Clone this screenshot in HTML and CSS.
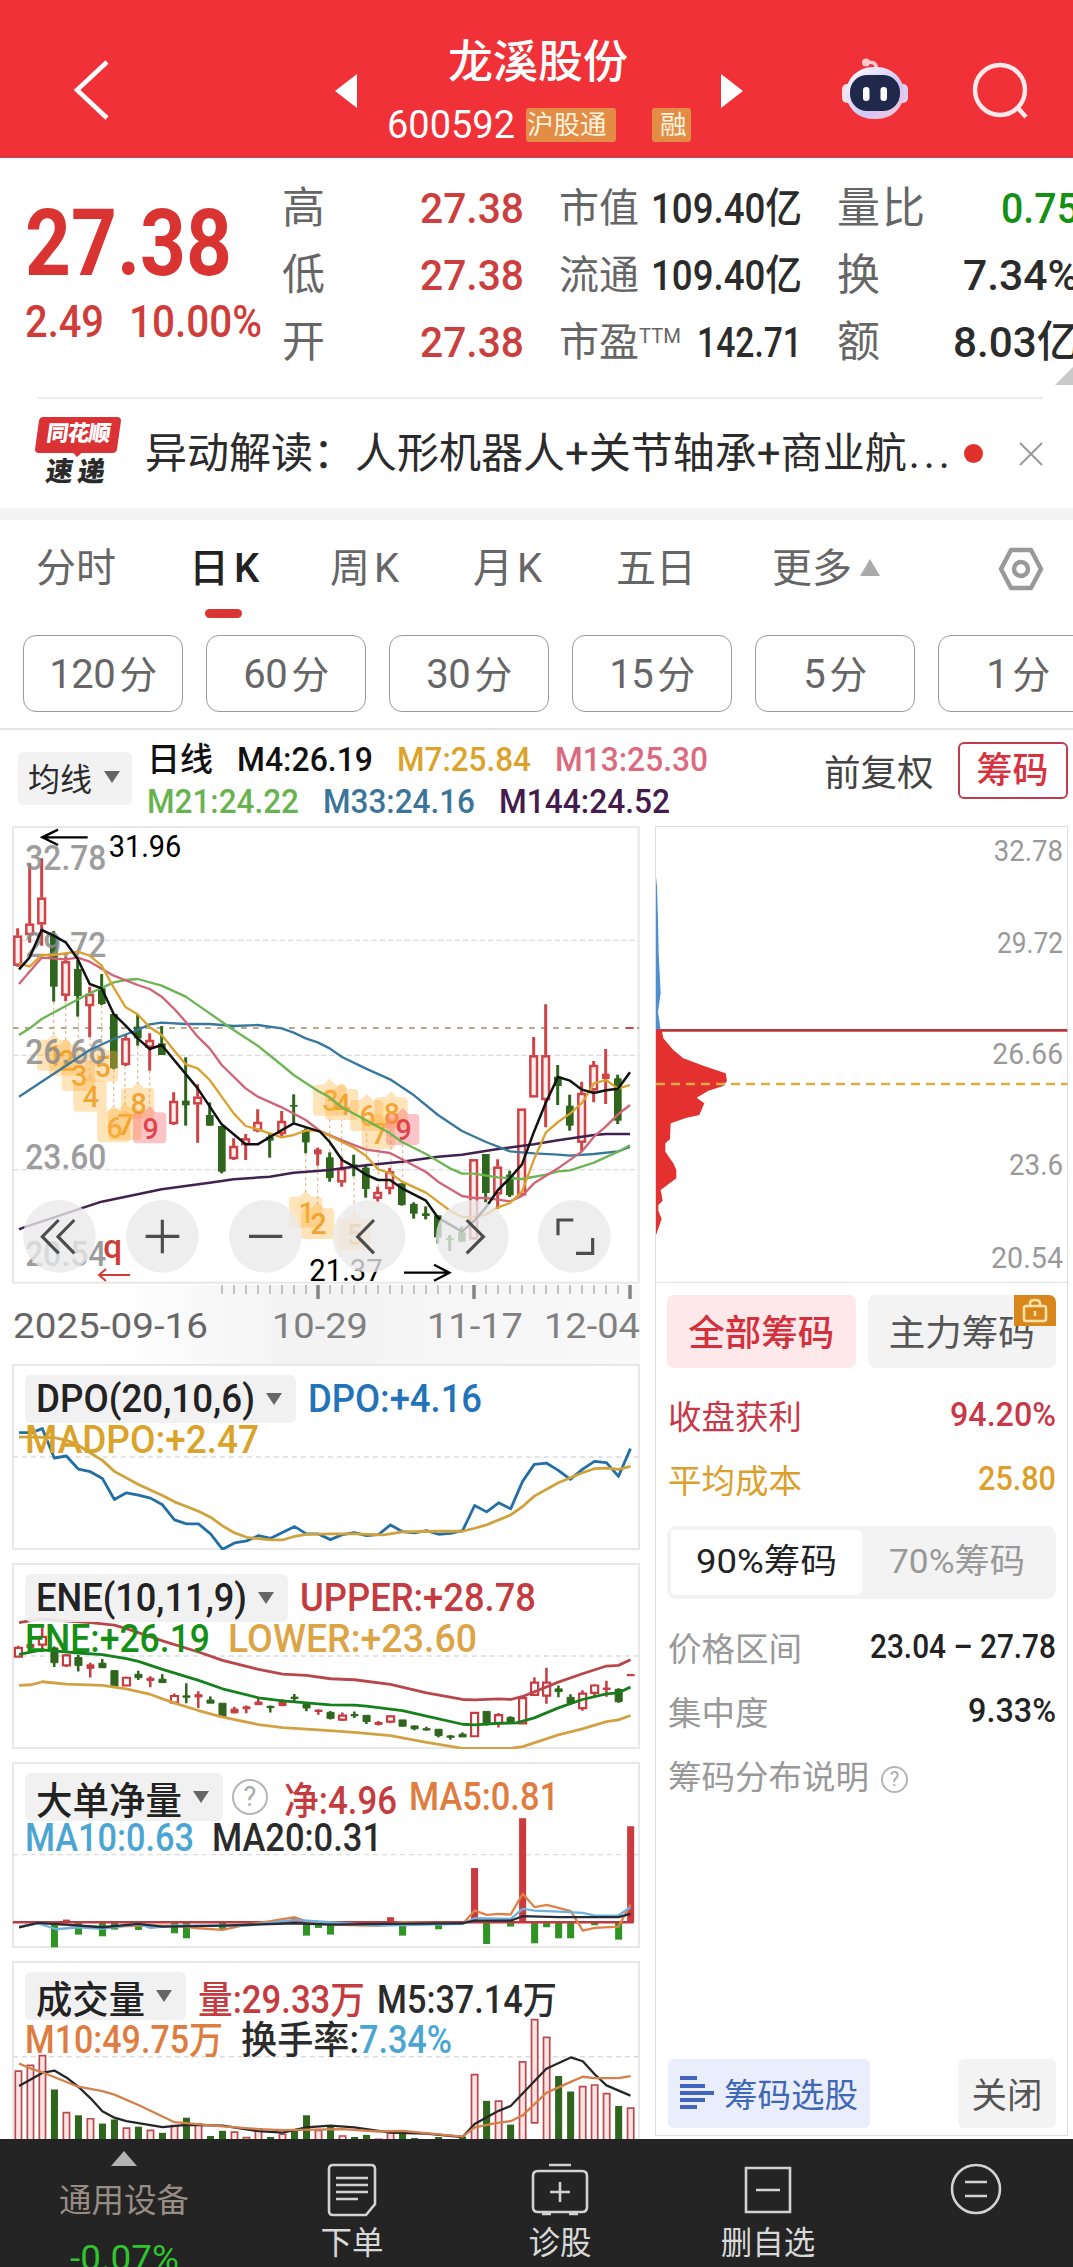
FILE: index.html
```html
<!DOCTYPE html>
<html lang="zh-CN">
  <head>
    <meta charset="UTF-8">
    <meta name="viewport" content="width=device-width, initial-scale=1.0">
    <title>龙溪股份 600592</title>
    <link rel="stylesheet" href="styles.css">
  </head>
  <body>
    <header class="topbar">
      <svg class="back" width="40" height="64" viewBox="0 0 40 64"><path d="M35 4 L5 32 L35 60"/></svg>
      <svg class="arrow" width="22" height="34" viewBox="0 0 22 34"><path d="M22 0 V34 L0 17 Z"/></svg>
      <div class="stock">
        <h1>龙溪股份</h1>
        <div class="stock-code">
          <span data-w="128">600592</span>
          <span class="tag tag-hgt">沪股通</span>
          <span class="tag tag-rong">融</span>
        </div>
      </div>
      <svg class="arrow" width="22" height="34" viewBox="0 0 22 34"><path d="M0 0 V34 L22 17 Z"/></svg>
      <svg class="robot" width="68" height="64" viewBox="0 0 68 64">
        <defs>
          <linearGradient id="shell" x1="0" y1="0" x2="1" y2="1">
            <stop offset="0" stop-color="#ffffff"/>
            <stop offset="0.6" stop-color="#cfc8f7"/>
            <stop offset="1" stop-color="#ffc4d4"/>
          </linearGradient>
        </defs>
        <path d="M35 12 C36 6 32 5 26 5" fill="none" stroke="#ffc9cf" stroke-width="3.5"/>
        <circle cx="25" cy="5.500" r="4" fill="#ffc9cf"/>
        <rect x="1" y="27" width="10" height="19" rx="5" fill="#fbe0ea"/>
        <rect x="57" y="27" width="10" height="19" rx="5" fill="#dccff5"/>
        <rect x="5" y="10" width="58" height="52" rx="27" fill="url(#shell)"/>
        <rect x="9" y="18" width="50" height="36" rx="17" fill="#20294b"/>
        <rect x="22" y="30" width="6.500" height="14" rx="3.200" fill="#fff"/>
        <rect x="39.500" y="30" width="6.500" height="14" rx="3.200" fill="#fff"/>
      </svg>
      <svg class="search" width="60" height="60" viewBox="0 0 60 60">
        <circle cx="28" cy="28" r="25"/>
        <path d="M45 45 L54 55"/>
      </svg>
    </header>

    <section class="quote">
      <div class="price-box">
        <div class="price"><span data-w="207">27.38</span></div>
        <div class="change"><span data-w="79">2.49</span><span data-w="133">10.00%</span></div>
      </div>
      <dl class="quote-col ohl">
        <dt>高</dt><dd class="red"><span data-w="104">27.38</span></dd>
        <dt>低</dt><dd class="red"><span data-w="104">27.38</span></dd>
        <dt>开</dt><dd class="red"><span data-w="104">27.38</span></dd>
      </dl>
      <dl class="quote-col cap">
        <dt>市值</dt><dd><span data-w="151">109.40亿</span></dd>
        <dt>流通</dt><dd><span data-w="151">109.40亿</span></dd>
        <dt>市盈<sup data-w="42">TTM</sup></dt><dd><span data-w="105">142.71</span></dd>
      </dl>
      <dl class="quote-col turn">
        <dt>量比</dt><dd class="green"><span data-w="78">0.75</span></dd>
        <dt>换</dt><dd><span data-w="116">7.34%</span></dd>
        <dt>额</dt><dd><span data-w="126">8.03亿</span></dd>
      </dl>
      <i class="more-corner"></i>
    </section>

    <section class="news">
      <div class="news-logo">
        <span class="news-brand">同花顺</span>
        <span class="news-name">速递</span>
      </div>
      <p>异动解读：人形机器人+关节轴承+商业航<span>...</span></p>
      <i class="dot"></i>
      <svg width="24" height="24" viewBox="0 0 24 24"><path d="M1 1 L23 23 M23 1 L1 23"/></svg>
    </section>

    <nav class="tabs">
      <a>分时</a>
      <a class="active">日<b>K</b></a>
      <a>周<span>K</span></a>
      <a>月<span>K</span></a>
      <a>五日</a>
      <a>更多<i class="tri-up"></i></a>
      <svg width="46" height="44" viewBox="0 0 46 44">
        <path d="M13 3 H33 L43 22 L33 41 H13 L3 22 Z"/>
        <circle cx="23" cy="22" r="7"/>
      </svg>
    </nav>

    <div class="periods">
      <button>120<span>分</span></button>
      <button>60<span>分</span></button>
      <button>30<span>分</span></button>
      <button>15<span>分</span></button>
      <button>5<span>分</span></button>
      <button>1<span>分</span></button>
    </div>

    <section class="ma-bar">
      <button class="ma-select">均线<i class="tri-down"></i></button>
      <div class="ma-values">
        <div>
          <span class="c-black ma-name">日线</span>
          <span class="c-black" data-w="136">M4:26.19</span>
          <span class="c-yellow" data-w="134">M7:25.84</span>
          <span class="c-pink" data-w="153">M13:25.30</span>
        </div>
        <div>
          <span class="c-lime" data-w="152">M21:24.22</span>
          <span class="c-blue" data-w="152">M33:24.16</span>
          <span class="c-purple" data-w="171">M144:24.52</span>
        </div>
      </div>
      <span class="adjust">前复权</span>
      <button class="chip-toggle">筹码</button>
    </section>

    <main class="board">
      <div class="left">
        <svg id="kline" class="kline" width="628" height="459" viewBox="36 18 1884 1377"></svg>
        <svg id="axis" class="axis" width="628" height="79" viewBox="12 1285 628 79"></svg>

        <div class="panel">
          <svg id="dpo" viewBox="28 282 1515 556" preserveAspectRatio="none"></svg>
          <div class="panel-head">
            <div>
              <button><span data-w="219">DPO(20,10,6)</span><i class="tri-down"></i></button>
              <span class="c-dpo" data-w="174">DPO:+4.16</span>
            </div>
            <div><span class="c-yellow" data-w="234">MADPO:+2.47</span></div>
          </div>
        </div>

        <div class="panel">
          <svg id="ene" viewBox="28 879 1515 556" preserveAspectRatio="none"></svg>
          <div class="panel-head">
            <div>
              <button><span data-w="211">ENE(10,11,9)</span><i class="tri-down"></i></button>
              <span class="c-red" data-w="236">UPPER:+28.78</span>
            </div>
            <div>
              <span class="c-green" data-w="185">ENE:+26.19</span>
              <span class="c-gold" data-w="249">LOWER:+23.60</span>
            </div>
          </div>
        </div>

        <div class="panel">
          <svg id="netflow" viewBox="28 36 1515 556" preserveAspectRatio="none"></svg>
          <div class="panel-head">
            <div>
              <button><span data-w="146">大单净量</span><i class="tri-down"></i></button>
              <i class="help">?</i>
              <span class="c-red" data-w="113">净:4.96</span>
              <span class="c-orange" data-w="150">MA5:0.81</span>
            </div>
            <div>
              <span class="c-sky" data-w="169">MA10:0.63</span>
              <span class="c-dark" data-w="170">MA20:0.31</span>
            </div>
          </div>
        </div>

        <div class="panel last">
          <svg id="volume" viewBox="28 632 1515 540" preserveAspectRatio="none"></svg>
          <div class="panel-head">
            <div>
              <button><span data-w="109">成交量</span><i class="tri-down"></i></button>
              <span class="c-red" data-w="167">量:29.33万</span>
              <span class="c-dark" data-w="180">M5:37.14万</span>
            </div>
            <div>
              <span class="c-orange" data-w="198">M10:49.75万</span>
              <span class="turnover"><span class="c-dark" data-w="118">换手率:</span><span class="c-sky" data-w="93">7.34%</span></span>
            </div>
          </div>
        </div>
      </div>

      <aside class="chips">
        <svg id="chips" width="413" height="457" viewBox="45 18 1239 1371"></svg>
        <div class="chip-tabs">
          <button class="on">全部筹码</button>
          <button>主力筹码
            <i class="lock"><svg width="26" height="26" viewBox="0 0 26 26"><rect x="2" y="8" width="22" height="15" rx="2"/><path d="M8 8 V5 Q8 2 13 2 Q18 2 18 5 V8 M13 13 V18"/></svg></i>
          </button>
        </div>
        <div class="chip-row c-profit"><span>收盘获利</span><b data-w="106">94.20%</b></div>
        <div class="chip-row c-cost"><span>平均成本</span><b data-w="78">25.80</b></div>
        <div class="chip-seg"><span class="on"><em data-w="141">90%筹码</em></span><span><em data-w="136">70%筹码</em></span></div>
        <div class="chip-row"><span>价格区间</span><b data-w="186">23.04 – 27.78</b></div>
        <div class="chip-row"><span>集中度</span><b data-w="88">9.33%</b></div>
        <div class="chip-row"><span>筹码分布说明<i class="help small">?</i></span></div>
        <div class="chip-actions">
          <button class="pick">
            <svg width="34" height="34" viewBox="0 0 34 34"><path d="M0 2 H17 M0 10 H25 M0 17 H34 M0 24 H25 M0 31 H17"/></svg>
            筹码选股
          </button>
          <button class="close">关闭</button>
        </div>
      </aside>
    </main>

    <footer class="bottom">
      <div class="sector">
        <i class="tri-up"></i>
        <span>通用设备</span>
        <b data-w="109">-0.07%</b>
      </div>
      <div class="tool">
        <svg width="56" height="56" viewBox="0 0 56 56"><path d="M9 4 H47 Q51 4 51 8 V43 L42 54 H9 Q5 54 5 50 V8 Q5 4 9 4 Z M12 17 H44 M12 24 H44 M12 31 H44 M12 38 H34"/></svg>
        <span>下单</span>
      </div>
      <div class="tool">
        <svg width="58" height="56" viewBox="0 0 58 56"><path d="M18 4 H40 M7 10 H51 Q56 10 56 15 V46 Q56 51 51 51 H7 Q2 51 2 46 V15 Q2 10 7 10 Z M29 21 V41 M19 31 H39 M11 53 H20 M38 53 H47"/></svg>
        <span>诊股</span>
      </div>
      <div class="tool">
        <svg width="56" height="56" viewBox="0 0 56 56"><path d="M6 7 H50 V51 H6 Z M16 29 H40"/></svg>
        <span>删自选</span>
      </div>
      <div class="tool">
        <svg width="56" height="56" viewBox="0 0 56 56"><circle cx="28" cy="28" r="24"/><path d="M17 21 H39 M17 35 H39"/></svg>
      </div>
    </footer>

    <script src="charts.js"></script>
  </body>
</html>
```
FILE: styles.css
```css
* {
  box-sizing: border-box;
}
body {
  margin: 0;
  width: 1073px;
  height: 2267px;
  overflow: hidden;
  background: #fff;
  color: #2b2b2b;
  font-family: Roboto, "Noto Sans CJK SC", sans-serif;
}
h1, p, dl, dd {
  margin: 0;
}
button {
  margin: 0;
  padding: 0;
  border: 0;
  font: inherit;
  color: inherit;
}
i, em {
  font-style: normal;
}
svg {
  display: block;
}
[data-w] {
  display: inline-block;
  flex: none;
  white-space: nowrap;
  transform-origin: 0 50%;
}

.c-black { color: #111; }
.c-dark { color: #2b2b2b; }
.c-yellow { color: #dba32a; }
.c-gold { color: #dda445; }
.c-pink { color: #dc6a7e; }
.c-lime { color: #68b350; }
.c-blue { color: #3b7599; }
.c-purple { color: #451a4d; }
.c-dpo { color: #2273b8; }
.c-red { color: #c43c40; }
.c-green { color: #159015; }
.c-orange { color: #df7c40; }
.c-sky { color: #4aa5d2; }

.tri-down {
  border: 8px solid transparent;
  border-top: 12px solid #666;
  border-bottom: 0;
}

/* top bar */
.topbar {
  display: flex;
  align-items: flex-start;
  height: 158px;
  background: #f03138;
  border-bottom: 2px solid #d8393f;
  color: #fff;
}
.topbar .back {
  margin: 58px 0 0 72px;
  fill: none;
  stroke: #fff;
  stroke-width: 4.5;
}
.topbar .arrow {
  margin-top: 74px;
  fill: #fff;
}
.topbar .back + .arrow {
  margin-left: 223px;
}
.stock {
  width: 364px;
  padding: 33px 0 0 30px;
}
.stock h1 {
  margin-left: 61px;
  font-size: 45px;
  line-height: 60px;
  font-weight: 500;
}
.stock-code {
  display: flex;
  align-items: center;
  height: 34px;
  margin-top: 15px;
  font-size: 38px;
}
.tag {
  height: 34px;
  background: #e38c45;
  border-radius: 3px;
  color: #fff3dd;
  font-size: 26.500px;
  line-height: 33px;
}
.tag-hgt {
  width: 90px;
  margin-left: 11px;
  padding-left: 1px;
}
.tag-rong {
  width: 39px;
  margin-left: 36px;
  padding-left: 8px;
}
.robot {
  margin: 57px 0 0 98px;
}
.search {
  margin: 62px 0 0 63px;
  fill: none;
  stroke: #ffe9ea;
  stroke-width: 4.5;
}

/* quote */
.quote {
  position: relative;
  display: flex;
  height: 241px;
  overflow: hidden;
}
.quote::after {
  content: "";
  position: absolute;
  left: 38px;
  right: 30px;
  bottom: 0;
  border-bottom: 2px solid #ececec;
}
.price-box {
  width: 282px;
  flex: none;
  padding: 36px 0 0 25px;
  color: #d93431;
}
.price {
  height: 100px;
  font-size: 92px;
  font-weight: 700;
  line-height: 100px;
}
.change {
  display: flex;
  gap: 25px;
  margin-top: 2px;
  font-size: 45px;
  line-height: 52px;
  color: #cf3d3b;
  font-weight: 500;
}
.quote-col {
  display: grid;
  grid-template-columns: max-content auto;
  grid-auto-rows: 67px;
  justify-content: space-between;
  align-content: start;
  flex: none;
  padding-top: 17px;
  line-height: 67px;
  font-weight: 500;
}
.quote-col dt {
  font-size: 43px;
  font-weight: 400;
  color: #666;
  white-space: nowrap;
}
.quote-col dd {
  width: 0;
  justify-self: end;
  display: flex;
  justify-content: flex-end;
  font-size: 43px;
}
.ohl {
  width: 242px;
}
.cap {
  width: 243px;
  margin-left: 35px;
}
.quote-col.cap dt {
  font-size: 40px;
}
.quote-col.cap dd {
  font-size: 42px;
}
.cap sup {
  position: relative;
  top: -13px;
  font-size: 20px;
  line-height: 0;
  vertical-align: baseline;
}
.turn {
  width: 242px;
  margin-left: 35px;
}
.turn dt {
  letter-spacing: 2px;
}
.red { color: #cc3f3f; }
.green { color: #149014; }
.more-corner {
  position: absolute;
  right: 0;
  bottom: 14px;
  border-left: 18px solid transparent;
  border-bottom: 18px solid #c9c9c9;
}

/* news */
.news {
  display: flex;
  align-items: center;
  height: 121px;
  border-bottom: 12px solid #f3f3f3;
}
.news-logo {
  width: 82px;
  margin: -1px 0 0 37px;
}
.news-brand,
.news-name {
  display: block;
  transform: skewX(-8deg);
  white-space: nowrap;
  font-weight: 900;
  text-align: center;
}
.news-brand {
  position: relative;
  height: 36px;
  border-radius: 4px;
  background: #da3235;
  color: #fff;
  font-size: 22px;
  line-height: 34px;
  letter-spacing: -1px;
}
.news-brand::after {
  content: "";
  position: absolute;
  left: 38px;
  top: 35px;
  border: 5px solid transparent;
  border-top-color: #da3235;
}
.news-name {
  margin-top: 2px;
  font-size: 27px;
  line-height: 34px;
  letter-spacing: 5px;
}
.news p {
  width: 812px;
  margin-left: 26px;
  font-size: 42px;
  line-height: 60px;
  white-space: nowrap;
}
.news p span {
  margin-left: 2px;
  letter-spacing: 4px;
}
.news .dot {
  width: 19px;
  height: 19px;
  margin-left: 7px;
  border-radius: 50%;
  background: #e0312c;
}
.news svg {
  margin-left: 36px;
  fill: none;
  stroke: #999;
  stroke-width: 2;
}

/* period tabs */
.tabs {
  display: flex;
  align-items: flex-start;
  height: 115px;
  padding: 21px 0 0 36px;
  color: #666;
  font-size: 40px;
  line-height: 56px;
  white-space: nowrap;
}
.tabs a {
  width: 143px;
}
.tabs a:first-child {
  width: 153px;
}
.tabs a:nth-child(2) {
  width: 141px;
}
.tabs a:nth-child(5) {
  width: 156px;
}
.tabs span {
  margin-left: 4px;
}
.tabs .active {
  position: relative;
  color: #222;
  font-weight: 500;
}
.tabs .active b {
  margin-left: 5px;
  font-weight: 500;
}
.tabs .active::after {
  content: "";
  position: absolute;
  left: 16px;
  top: 68px;
  width: 37px;
  height: 9px;
  border-radius: 5px;
  background: #d73634;
}
.tabs .tri-up {
  display: inline-block;
  margin: 0 0 6px 8px;
  border: 10px solid transparent;
  border-bottom: 17px solid #aaa;
  border-top: 0;
}
.tabs svg {
  margin: 6px 0 0 83px;
  fill: none;
  stroke: #999;
  stroke-width: 4.5;
  stroke-linejoin: round;
}
.periods {
  display: flex;
  gap: 23px;
  height: 95px;
  padding-left: 23px;
  overflow: hidden;
  border-bottom: 2px solid #e4e4e4;
}
.periods button {
  flex: none;
  width: 160px;
  height: 77px;
  padding-bottom: 4px;
  border: 1.500px solid #999;
  border-radius: 13px;
  background: #fff;
  color: #666;
  font-size: 40px;
  letter-spacing: -0.5px;
}
.periods span {
  margin-left: 4px;
  font-size: 38px;
}

/* moving averages */
.ma-bar {
  display: flex;
  align-items: flex-start;
  height: 96px;
  padding-left: 18px;
}
.ma-select {
  display: flex;
  align-items: center;
  width: 114px;
  height: 53px;
  margin-top: 22px;
  padding: 0 0 3px 10px;
  border-radius: 6px;
  background: #f2f2f2;
  font-size: 32px;
}
.ma-select .tri-down {
  margin-left: 12px;
}
.ma-values {
  width: 676px;
  padding: 9px 0 0 15px;
  font-size: 33.500px;
  line-height: 42px;
  font-weight: 500;
}
.ma-values div {
  display: flex;
  gap: 24px;
}
.ma-values .ma-name {
  font-size: 33px;
}
.adjust {
  margin: 19px 0 0 16px;
  font-size: 36.500px;
  line-height: 50px;
  color: #444;
}
.chip-toggle {
  width: 110px;
  height: 57px;
  margin: 12px 0 0 24px;
  border: 2px solid #c23b4c;
  border-radius: 6px;
  background: #fff;
  color: #d6323f;
  font-size: 36px;
  font-weight: 500;
  line-height: 50px;
}

/* charts */
.board {
  display: flex;
  height: 1313px;
  overflow: hidden;
}
.left {
  flex: none;
  width: 655px;
  padding-left: 12px;
}
.axis {
  background: linear-gradient(to right, #fff 15%, #f3f3f3 45%, #f9f9f9);
}
.panel {
  display: grid;
  width: 628px;
  height: 186px;
  margin-bottom: 13px;
  border: 2px solid #e8e8e8;
}
.panel > * {
  grid-area: 1 / 1;
}
.panel > svg {
  width: 628px;
  height: 186px;
  margin: -2px;
}
.panel.last {
  border-bottom: 0;
}
.panel svg * {
  vector-effect: non-scaling-stroke;
}
.panel-head {
  z-index: 1;
  padding: 9px 0 0 11px;
  font-size: 38px;
  font-weight: 500;
  white-space: nowrap;
}
.panel-head > div {
  display: flex;
  align-items: center;
  gap: 12px;
  height: 48px;
}
.panel-head > div + div {
  gap: 18px;
  height: 33px;
}
.panel-head button {
  display: flex;
  align-items: center;
  gap: 11px;
  height: 48px;
  padding: 0 14px 0 11px;
  border-radius: 6px;
  background: rgba(240, 240, 240, 0.92);
  color: #222;
}
.help {
  width: 36px;
  height: 36px;
  border: 2.500px solid #b5b5b5;
  border-radius: 50%;
  color: #aaa;
  font-size: 27px;
  font-weight: 400;
  line-height: 32px;
  text-align: center;
}
.panel-head .help {
  margin: 0 4px 0 -3px;
}
.help.small {
  display: inline-block;
  width: 27px;
  height: 27px;
  margin-left: 12px;
  border-width: 2px;
  font-size: 20px;
  line-height: 23px;
  vertical-align: 3px;
}
svg text {
  font-family: Roboto, "Noto Sans CJK SC", sans-serif;
}

/* chip distribution */
.chips {
  flex: none;
  width: 413px;
  height: 1310px;
  border: 1px solid #dedede;
}
.chips > svg {
  margin: -1px;
}
.chip-tabs {
  display: flex;
  gap: 12px;
  margin: 13px 11px 14px;
}
.chip-tabs button {
  position: relative;
  flex: 1;
  height: 73px;
  padding-bottom: 3px;
  border-radius: 7px;
  background: #f3f3f3;
  color: #555;
  font-size: 36.500px;
}
.chip-tabs .on {
  background: #fee8ea;
  color: #d2303c;
  font-weight: 500;
}
.lock {
  position: absolute;
  right: 0;
  top: 0;
  width: 42px;
  height: 31px;
  padding: 3px 8px;
  border-radius: 0 7px 0 0;
  background: #d8871c;
}
.lock svg {
  fill: none;
  stroke: #ffe3a8;
  stroke-width: 2.500;
}
.chip-row {
  display: flex;
  justify-content: space-between;
  align-items: center;
  height: 64px;
  padding: 0 11px 0 12px;
  font-size: 33.500px;
  color: #999;
}
.chip-row b {
  color: #222;
  font-weight: 500;
}
.c-profit, .chip-row.c-profit b {
  color: #c93848;
}
.c-cost, .chip-row.c-cost b {
  color: #dd9f2b;
}
.chip-seg {
  display: flex;
  height: 73px;
  margin: 16px 11px 15px;
  padding: 4px;
  border-radius: 9px;
  background: #f3f3f3;
  color: #999;
  font-size: 34px;
  line-height: 63px;
}
.chip-seg span {
  display: flex;
  flex: 1;
  justify-content: center;
}
.chip-seg .on {
  border-radius: 5px;
  background: #fff;
  color: #222;
}
.chip-actions {
  display: flex;
  justify-content: space-between;
  margin: 253px 11px 0 12px;
}
.chip-actions button {
  height: 69px;
  padding-bottom: 2px;
  border-radius: 6px;
}
.chip-actions .pick {
  display: flex;
  align-items: center;
  gap: 10px;
  width: 202px;
  padding-left: 12px;
  background: #e9edfc;
  color: #3e67b4;
  font-size: 33.500px;
  white-space: nowrap;
}
.pick svg {
  stroke: #4465bd;
  stroke-width: 4;
}
.chip-actions .close {
  width: 98px;
  background: #f3f3f3;
  color: #555;
  font-size: 35.500px;
}

/* bottom bar */
.bottom {
  display: grid;
  grid-template-columns: 248px repeat(4, 208px);
  height: 128px;
  overflow: hidden;
  background: #242424;
  color: #d8d8d8;
}
.bottom > div {
  display: flex;
  flex-direction: column;
  align-items: center;
}
.bottom .tri-up {
  margin-top: 12px;
  border: 13px solid transparent;
  border-bottom: 15px solid #b3b3b3;
  border-top: 0;
}
.sector span {
  margin-top: 12px;
  color: #978d85;
  font-size: 32.500px;
  line-height: 46px;
}
.sector b {
  margin-top: 10px;
  color: #2fc52f;
  font-size: 35px;
  font-weight: 400;
  line-height: 50px;
}
.tool svg {
  margin-top: 22px;
  fill: none;
  stroke: #d2d2d2;
  stroke-width: 2.600;
}
.tool span {
  margin-top: 2px;
  font-size: 31.500px;
  line-height: 49px;
}
```
FILE: charts.js
```js
document.querySelectorAll("[data-w]").forEach(function (el) {
  const natural = el.getBoundingClientRect().width;
  const w = Number(el.dataset.w);
  el.style.transform = `scaleX(${w / natural})`;
  el.style.marginRight = `${w - natural}px`;
});

// [colour, high, low, top, bottom]
const candles = [
  ["r", 325, 440, 347, 437], ["r", 130, 368, 311, 345], ["r", 115, 377, 233, 313], ["g", 333, 545, 348, 500],
  ["r", 410, 543, 424, 527], ["g", 420, 590, 447, 528], ["r", 500, 652, 522, 558], ["g", 462, 555, 505, 552],
  ["g", 582, 748, 582, 745], ["r", 645, 738, 655, 735], ["g", 583, 677, 620, 655], ["r", 640, 752, 660, 683],
  ["g", 618, 705, 670, 705], ["r", 817, 915, 843, 912], ["g", 712, 917, 842, 856], ["r", 793, 968, 830, 853],
  ["g", 847, 917, 885, 917], ["g", 918, 1060, 918, 1055], ["r", 955, 1020, 978, 1017], ["r", 942, 1020, 955, 975],
  ["r", 868, 937, 906, 933], ["g", 940, 1013, 950, 962], ["r", 873, 950, 903, 942], ["g", 823, 908, 855, 860],
  ["g", 925, 1000, 930, 967], ["r", 983, 1037, 988, 1003], ["g", 997, 1085, 1012, 1074], ["r", 1012, 1100, 1045, 1087],
  ["g", 1004, 1069, 1033, 1040], ["g", 1038, 1133, 1043, 1107], ["r", 1100, 1147, 1116, 1136], ["r", 1043, 1123, 1054, 1107],
  ["g", 1090, 1157, 1090, 1155], ["g", 1147, 1196, 1152, 1181], ["g", 1159, 1198, 1180, 1188], ["g", 1186, 1270, 1186, 1252],
  ["g", 1245, 1293, 1255, 1260], ["g", 1219, 1265, 1237, 1265], ["r", 1018, 1258, 1018, 1258], ["g", 1002, 1147, 1002, 1119],
  ["r", 1018, 1167, 1040, 1123], ["g", 1052, 1131, 1064, 1126], ["r", 866, 1126, 866, 1126], ["r", 651, 832, 706, 832],
  ["r", 553, 922, 706, 840], ["g", 735, 855, 770, 798], ["g", 824, 932, 857, 917], ["r", 785, 994, 819, 968],
  ["r", 723, 847, 735, 811], ["r", 687, 852, 761, 777], ["g", 764, 912, 775, 902], ["r", 621, 627, 621, 627]
];

const volumes = [
  950, 933, 905, 1005, 1070, 1080, 1088, 1104, 1092, 1115, 1113, 1122, 1131, 1108, 1087, 1103, 1140, 1125, 1127, 1143,
  1117, 1143, 1133, 1120, 1080, 1122, 1113, 1138, 1143, 1137, 1148, 1128, 1123, 1146, 1158, 1143, 1150, 1142, 960, 1038,
  1037, 1107, 923, 800, 852, 966, 1011, 995, 990, 1015, 1053, 1057
];

const flows = {
  3: 590, 4: 507, 5: 552, 7: 557, 8: 537, 10: 538, 13: 548, 14: 563, 17: 537, 23: 500, 24: 555, 25: 532, 26: 552,
  31: 500, 32: 555, 35: 536, 38: 353, 39: 580, 41: 528, 42: 204, 43: 578, 44: 530, 45: 563, 46: 563, 48: 524,
  50: 567, 51: 228
};

const line = (points, color, width = 2.3) =>
  `<polyline points="${points}" fill="none" stroke="${color}" stroke-width="${width}" stroke-linejoin="round"/>`;

const label = (x, y, w, size, color, text) =>
  `<text x="${x}" y="${y}" textLength="${w}" lengthAdjust="spacingAndGlyphs" font-size="${size}" fill="${color}">${text}</text>`;

const put = (id, html) => { document.getElementById(id).innerHTML = html; };

function dashed(x1, x2, y, color = "#dcdcdc", dash = "5 4", width = 1.3) {
  return `<path d="M${x1} ${y} H${x2}" stroke="${color}" stroke-width="${width}" stroke-dasharray="${dash}"/>`;
}

// Main chart
function drawKline() {
  let out = `<rect x="39" y="21" width="1877" height="1367" fill="#fff" stroke="#e8e8e8" stroke-width="6"/>`;
  [361, 706, 1049].forEach(y => { out += dashed(39, 1918, y, "#dcdcdc", "16 9", 3.5); });
  out += dashed(39, 1918, 624, "#b5a88b", "17 19", 6);

  candles.forEach(([c, high, low, top, bottom], i) => {
    const x = 53 + 36 * i;
    const color = c === "r" ? "#cf4245" : "#2f651c";
    const h = Math.max(bottom - top, 5);
    if (c === "r" && h > 18) {
      out += `<path d="M${x} ${high} V${top} M${x} ${bottom} V${low}" stroke="${color}" stroke-width="9"/>`;
      out += `<rect x="${x - 10}" y="${top + 3}" width="20" height="${h - 6}" fill="#fff0f0" stroke="${color}" stroke-width="7.500"/>`;
    } else {
      out += `<path d="M${x} ${high} V${low}" stroke="${color}" stroke-width="9"/>`;
      out += `<rect x="${x - 11}" y="${top}" width="23" height="${h}" fill="${color}"/>`;
    }
  });

  const marks = [
    [161, 707, 1], [197, 722, 2], [235, 768, 3], [270, 830, 4], [305, 740, 5], [341, 922, 6], [375, 915, 7], [413, 852, 8], [449, 925, 9],
    [917, 1178, 1], [953, 1212, 2], [989, 842, 3], [1025, 855, 4], [1062, 1245, 5], [1100, 888, 6], [1135, 942, 7], [1173, 880, 8], [1208, 930, 9]
  ];
  marks.forEach(([x, y, n]) => {
    const i = Math.round((x - 53) / 36);
    const low = candles[i][2];
    if (y > low) {
      out += `<path d="M${x} ${low} V${y - 60}" stroke="#dfb98c" stroke-width="3.500" stroke-dasharray="9 9"/>`;
    } else {
      out += `<path d="M${x} ${candles[i][1]} V${y + 45}" stroke="#dfb98c" stroke-width="3.500" stroke-dasharray="9 9"/>`;
    }
    const fill = n === 9 ? "#f8656c" : "#ffb548";
    out += `<path d="M${x - 38} ${y - 48} H${x - 18} L${x} ${y - 66} L${x + 18} ${y - 48} H${x + 38} Q${x + 50} ${y - 48} ${x + 50} ${y - 36} V${y + 33} Q${x + 50} ${y + 45} ${x + 38} ${y + 45} H${x - 38} Q${x - 50} ${y + 45} ${x - 50} ${y + 33} V${y - 36} Q${x - 50} ${y - 48} ${x - 38} ${y - 48} Z" fill="${fill}" opacity="0.38"/>`;
    out += `<text x="${x + 3}" y="${y + 31}" text-anchor="middle" font-size="86" font-weight="500" fill="${n === 9 ? "#da2f38" : "#f09b1c"}" opacity="0.85">${n}</text>`;
  });

  [[150, "32.78"], [412, "29.72"], [732, "26.66"], [1047, "23.60"], [1337, "20.54"]].forEach(([y, t]) => {
    out += `<g font-weight="500" opacity="0.85">${label(76, y, 243, 104, "#8c8c8c", t)}</g>`;
  });

  out += line("57,1228 70,1223 250,1163 305,1145 377,1130 485,1108 629,1088 701,1078 809,1070 881,1058 989,1050 1026,1045 1098,1036 1206,1025 1314,1010 1386,1004 1494,987 1602,973 1674,961 1782,945 1818,942 1890,942", "#41214f", 7.5);
  out += line("57,830 125,785 197,738 269,690 341,657 413,630 449,613 485,608 557,612 629,612 701,618 773,615 845,625 881,638 917,655 953,667 989,685 1026,711 1098,746 1170,778 1242,826 1314,885 1386,933 1458,966 1530,994 1602,1000 1674,1004 1710,1007 1782,1002 1854,994 1890,981", "#37789c", 7);
  out += line("57,645 89,625 125,597 197,558 269,520 341,487 377,480 413,477 485,497 557,530 629,580 701,630 773,677 845,735 881,765 953,812 989,832 1026,862 1098,901 1170,940 1206,966 1278,1002 1350,1045 1386,1061 1422,1061 1494,1072 1566,1077 1638,1064 1674,1054 1710,1051 1782,1028 1854,995 1890,976", "#6cb552", 7);
  out += line("57,492 125,413 197,418 233,413 269,425 341,467 413,495 449,507 485,530 521,565 557,605 593,650 629,685 665,735 737,805 773,830 845,862 917,900 960,933 1026,961 1098,989 1170,999 1206,1018 1278,1056 1314,1085 1386,1128 1422,1134 1458,1134 1530,1144 1566,1128 1602,1090 1674,1045 1746,994 1782,950 1818,919 1854,883 1890,855", "#cf6577", 7);
  out += line("57,430 89,440 125,405 161,405 233,395 269,407 305,437 341,503 377,562 413,583 449,622 485,645 521,690 557,733 593,745 629,780 665,830 701,880 737,918 773,928 845,952 881,945 917,932 953,932 989,947 1026,966 1062,983 1098,1007 1134,1048 1170,1059 1206,1085 1278,1118 1350,1172 1386,1191 1422,1191 1458,1183 1494,1162 1530,1149 1566,1115 1602,1018 1638,937 1674,906 1710,881 1746,849 1782,790 1818,780 1854,806 1890,795", "#dba12f", 7);
  out += line("57,448 89,412 125,330 161,347 197,367 233,417 269,492 305,505 341,582 377,617 413,655 449,687 485,675 593,805 665,913 737,973 773,973 820,945 881,910 960,935 989,966 1026,1020 1062,1040 1098,1064 1134,1080 1170,1080 1206,1105 1278,1142 1314,1193 1386,1235 1422,1203 1458,1162 1494,1110 1530,1074 1566,1033 1602,935 1638,847 1674,771 1710,782 1746,809 1782,819 1818,811 1854,806 1890,757", "#111", 7.5);

  out += label(326, 112, 218, 94, "#000", "31.96");
  out += label(928, 1382, 220, 94, "#000", "21.37");
  out += `<path d="M263 52 H127 M174 29 L127 52 L174 75 M1212 1358 H1348 M1302 1334 L1348 1358 L1302 1382" fill="none" stroke="#000" stroke-width="7"/>`;
  out += `<text x="310" y="1315" font-size="100" font-weight="500" fill="#cf3c38">q</text>`;
  out += `<path d="M390 1365 H297 M318 1347 L297 1365 L318 1383" fill="none" stroke="#cf3c38" stroke-width="6"/>`;

  [178, 487, 796, 1107, 1417, 1723].forEach(x => {
    out += `<circle cx="${x}" cy="1249" r="109" fill="#e9e9e9" opacity="0.78"/>`;
  });
  out += `<path d="M176 1200 L127 1250 L176 1300 M223 1200 L174 1250 L223 1300 M437 1249 H538 M487 1199 V1300 M747 1249 H847 M1122 1200 L1073 1250 L1122 1300 M1400 1200 L1450 1250 L1400 1300 M1674 1246 V1200 H1720 M1778 1254 V1300 H1728" fill="none" stroke="#4d4d4d" stroke-width="9.500"/>`;
  put("kline", out);
}

function drawAxis() {
  let out = "";
  for (let i = 17; i < 52; i++) {
    const big = i === 25 || i === 38 || i === 51;
    out += `<path d="M${18 + 12 * i} 1285 V${big ? 1299 : 1294}" stroke="${big ? "#858585" : "#a5a5a5"}" stroke-width="${big ? 3.5 : 1.3}"/>`;
  }
  out += label(13, 1338, 195, 35, "#666", "2025-09-16");
  out += label(272, 1338, 96, 35, "#808080", "10-29");
  out += label(427, 1338, 96, 35, "#808080", "11-17");
  out += label(544, 1338, 96, 35, "#808080", "12-04");
  put("axis", out);
}

const subX = i => 43 + 28.96 * i;

function drawDpo() {
  put("dpo", dashed(30, 1542, 560)
    + line("45,487 75,487 101,475 130,563 159,557 188,596 217,604 246,624 275,687 304,667 333,674 362,683 391,703 420,748 449,760 478,760 507,790 536,836 565,817 594,811 623,795 652,803 710,768 738,790 767,790 796,807 825,792 854,786 883,795 912,792 941,763 970,783 999,787 1028,780 1057,791 1086,788 1115,780 1144,705 1173,724 1202,697 1231,715 1260,632 1288,582 1317,578 1346,600 1375,627 1404,597 1433,573 1462,577 1491,618 1520,535", "#226fa5", 2.8)
    + line("45,500 130,502 160,510 188,525 217,548 246,570 275,603 333,642 391,675 420,694 478,722 507,740 536,766 565,787 594,800 652,808 681,808 710,797 738,791 796,790 854,790 925,793 970,784 1057,782 1115,782 1144,773 1173,763 1231,733 1260,708 1288,677 1346,637 1404,607 1433,595 1462,593 1491,597 1520,588", "#cfa33c", 2.8));
}

function drawEne() {
  // same candles as the main chart on a smaller price scale
  const y = v => 1213 + 0.29 * (v - 624);
  let out = dashed(30, 1542, 1157);
  candles.forEach(([c, high, low, top, bottom], i) => {
    const x = subX(i);
    const color = c === "r" ? "#c63c40" : "#2f651c";
    const h = Math.max(y(bottom) - y(top), 4);
    const hollow = c === "r" && h > 12;
    out += `<path d="M${x} ${y(high)} V${y(top)} M${x} ${y(bottom)} V${y(low)}" stroke="${color}" stroke-width="2.500"/>`;
    out += `<rect x="${x - 8}" y="${y(top)}" width="17" height="${h}" fill="${hollow ? "#fff" : color}" stroke="${color}" stroke-width="${hollow ? 2.2 : 1}"/>`;
  });
  out += line("45,1057 101,1045 130,1050 217,1057 275,1065 304,1075 391,1112 478,1145 536,1170 623,1197 681,1211 738,1215 796,1225 854,1228 941,1242 1028,1267 1115,1287 1144,1288 1202,1285 1231,1287 1260,1278 1346,1235 1404,1210 1462,1187 1491,1185 1520,1168", "#b9464b", 2.8);
  out += line("45,1152 101,1139 188,1148 246,1153 304,1165 333,1173 391,1197 478,1230 536,1255 623,1282 681,1291 738,1297 796,1303 854,1304 883,1307 970,1320 1028,1337 1115,1361 1144,1363 1202,1358 1245,1357 1288,1342 1346,1312 1404,1287 1462,1270 1491,1267 1520,1250", "#15801c", 2.8);
  out += line("45,1245 75,1243 101,1234 159,1241 246,1245 304,1255 362,1272 420,1298 478,1320 536,1340 623,1362 681,1371 767,1378 854,1385 941,1395 1028,1415 1115,1433 1231,1433 1260,1428 1346,1393 1404,1375 1462,1353 1491,1348 1520,1335", "#d2a144", 2.8);
  put("ene", out);
}

function drawNetflow() {
  let out = dashed(30, 1542, 313);
  Object.keys(flows).forEach(i => {
    const v = flows[i];
    const color = v < 515 ? "#cb3a3c" : "#309425";
    out += `<rect x="${subX(Number(i)) - 8}" y="${Math.min(v, 515)}" width="17" height="${Math.abs(v - 515)}" fill="${color}"/>`;
  });
  out += line("30,515 1528,515", "#bd3b3f", 2.6);
  out += line("45,530 90,518 130,520 188,526 246,530 333,525 420,525 478,533 536,538 594,522 652,512 710,500 738,512 796,522 912,526 970,515 1057,518 1115,520 1144,480 1173,493 1202,490 1231,492 1260,430 1289,470 1318,463 1376,482 1405,540 1434,532 1491,528 1520,462", "#e08148");
  out += line("45,528 90,518 135,536 188,530 246,535 333,520 362,532 420,525 594,525 710,508 796,515 912,525 1115,520 1144,503 1231,505 1260,475 1289,480 1347,483 1405,487 1434,495 1491,495 1520,470", "#6fb0dc");
  out += line("45,530 90,517 159,522 246,530 333,520 391,528 536,525 710,518 796,522 925,520 1115,518 1144,510 1231,510 1260,497 1347,500 1491,500 1520,490", "#262b38");
  put("netflow", out);
}

function drawVolume() {
  let out = dashed(30, 1542, 910);
  volumes.forEach((v, i) => {
    const red = candles[i][0] === "r";
    const x = subX(i) - 8;
    out += red
      ? `<rect x="${x + 1}" y="${v + 2}" width="15" height="300" fill="#fde3e3" stroke="#b9494d" stroke-width="1.700"/>`
      : `<rect x="${x}" y="${v}" width="17" height="300" fill="#2f651c"/>`;
  });
  out += line("45,995 101,957 130,950 159,970 188,997 217,1030 246,1068 275,1087 304,1097 391,1114 449,1108 536,1110 623,1126 681,1130 738,1115 796,1110 854,1115 941,1130 1028,1133 1115,1143 1144,1105 1202,1067 1231,1053 1317,945 1376,912 1405,923 1433,960 1462,993 1520,1023", "#262626");
  out += line("45,930 75,945 101,955 188,997 246,1010 275,1020 333,1050 420,1100 536,1112 623,1120 681,1123 825,1120 912,1127 970,1125 1115,1142 1144,1115 1202,1101 1231,1097 1260,1080 1317,1015 1376,983 1405,968 1433,972 1491,972 1520,966", "#d4804c");
  put("volume", out);
}

function drawChips() {
  let out = `<path d="M46 1387 H1283" stroke="#dedede" stroke-width="3"/>`;
  out += `<polygon points="48,170 51,200 54,300 56,400 61,500 62,520 54,575 62,631 48,631" fill="#4d8fd0"/>`;
  out += `<polygon points="48,628 65,628 70,655 100,690 130,715 190,737 257,760 261,782 250,798 205,812 170,833 193,850 178,885 140,893 92,910 90,958 76,970 76,995 100,1030 109,1050 109,1075 62,1110 68,1142 55,1155 55,1172 65,1197 50,1240 48,1245" fill="#e53030"/>`;
  out += `<path d="M62 631 H1282" stroke="#b5393c" stroke-width="8"/>`;
  out += dashed(48, 1282, 792, "#deac40", "27 18", 7);
  [[124, 208, "32.78"], [400, 198, "29.72"], [732, 212, "26.66"], [1065, 162, "23.6"], [1343, 216, "20.54"]].forEach(([y, w, t]) => {
    out += label(1269 - w, y, w, 87, "#999", t);
  });
  put("chips", out);
}

drawKline();
drawAxis();
drawDpo();
drawEne();
drawNetflow();
drawVolume();
drawChips();
```
